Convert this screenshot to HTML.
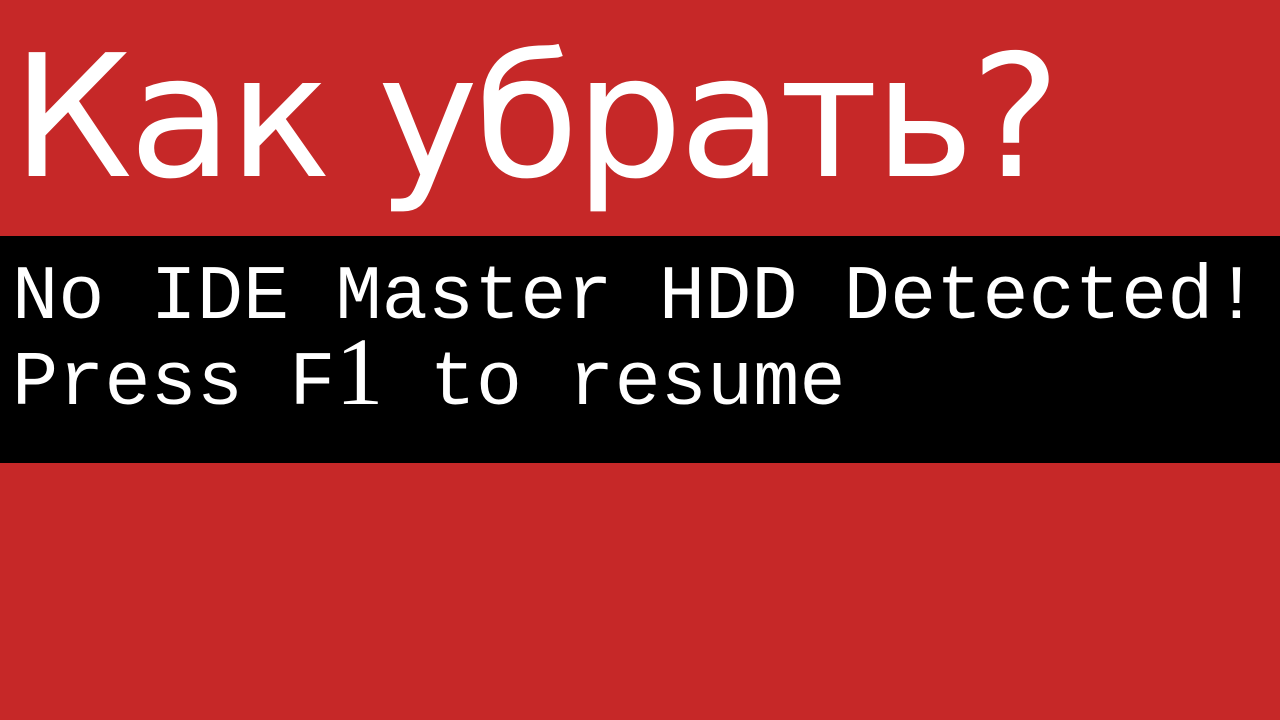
<!DOCTYPE html>
<html><head><meta charset="utf-8"><style>
html,body{margin:0;padding:0}
body{width:1280px;height:720px;background:#c62828;position:relative;overflow:hidden}
.t{position:absolute;left:12px;top:0;font-family:"DejaVu Sans",sans-serif;font-size:170px;color:#fff;line-height:1;letter-spacing:-4px;white-space:nowrap}
.band{position:absolute;left:0;top:236px;width:1280px;height:227px;background:#000}
.m{position:absolute;left:12px;font-family:"Liberation Mono",monospace;font-size:77px;color:#fff;white-space:pre;line-height:1}
.one{font-family:"Liberation Serif",serif;font-size:96px;line-height:0}
</style></head><body>
<div class="t" style="top:33px">Как убрать?</div>
<div class="band"></div>
<div class="m" style="top:260px">No IDE Master HDD Detected!</div>
<div class="m" style="top:346px">Press F<span class="one">1</span> to resume</div>
</body></html>
